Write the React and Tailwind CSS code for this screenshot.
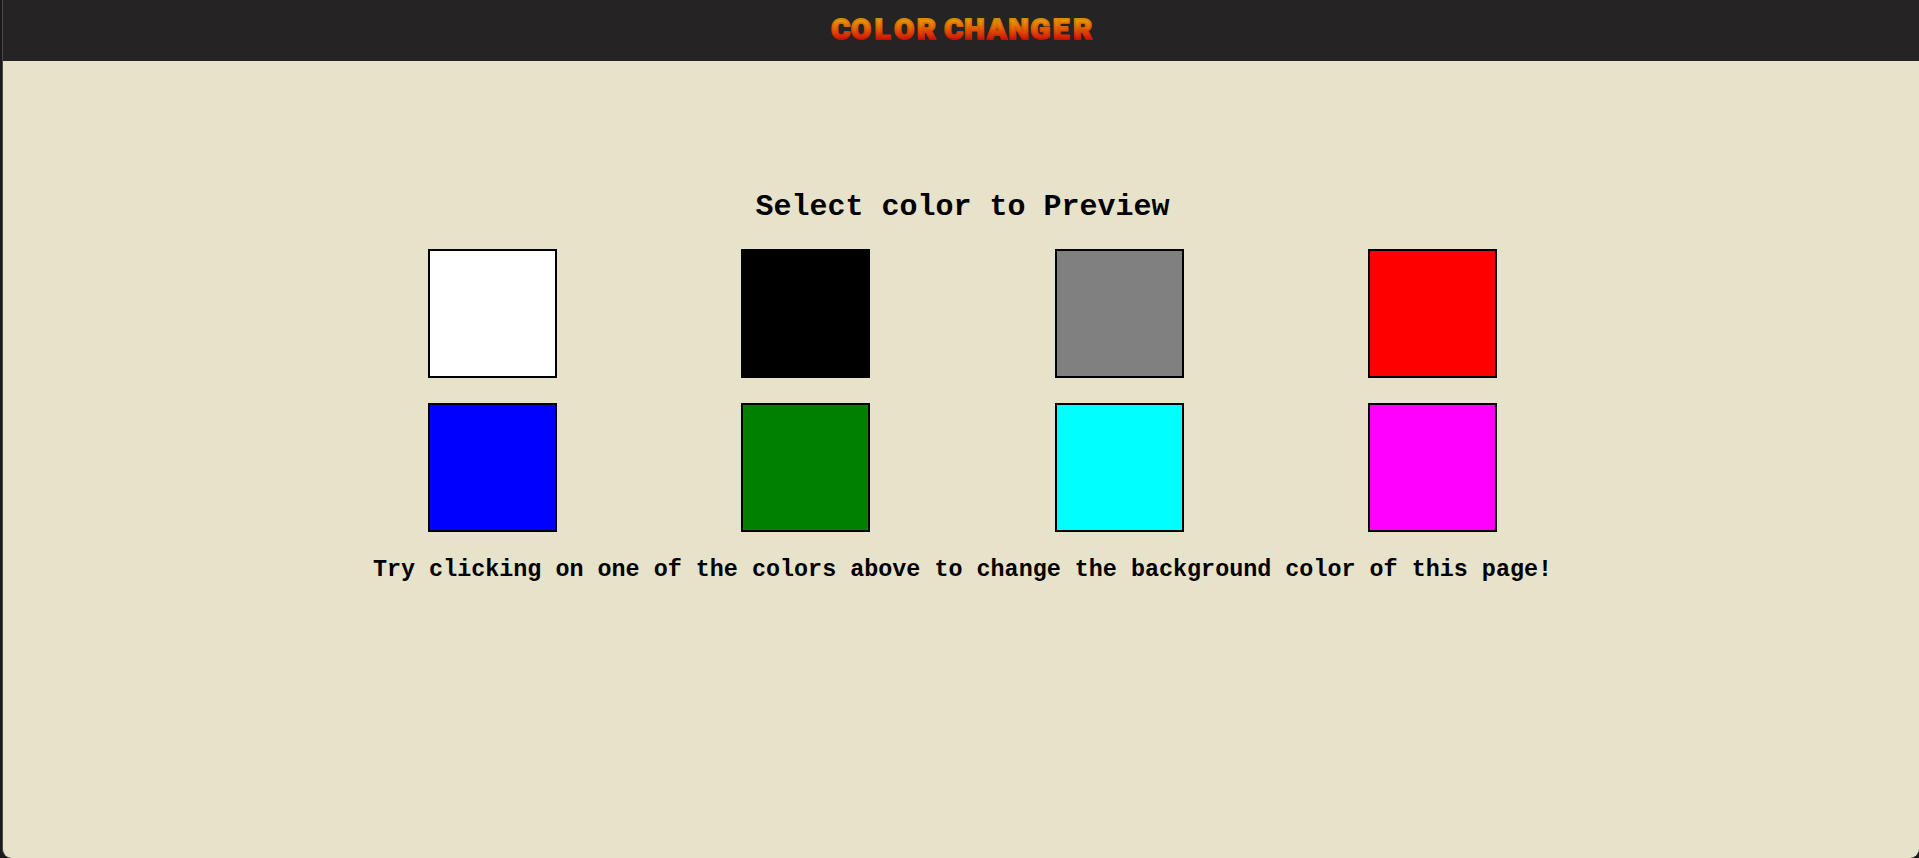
const swatches = [
  { name: "white", fill: "bg-white" },
  { name: "black", fill: "bg-black" },
  { name: "gray", fill: "bg-[#808080]" },
  { name: "red", fill: "bg-[#ff0000]" },
  { name: "blue", fill: "bg-[#0000ff]" },
  { name: "green", fill: "bg-[#008000]" },
  { name: "cyan", fill: "bg-[#00ffff]" },
  { name: "magenta", fill: "bg-[#ff00ff]" },
];

function Logo() {
  return (
    <svg width="275" height="34" viewBox="0 0 275 34" role="img" aria-label="Color Changer" className="overflow-visible">
      <defs>
        <linearGradient id="flame" gradientUnits="userSpaceOnUse" x1="0" y1="6" x2="0" y2="28">
          <stop offset="0" stopColor="#f0a400" />
          <stop offset="0.5" stopColor="#e66000" />
          <stop offset="1" stopColor="#d50c00" />
        </linearGradient>
        <linearGradient id="ember" gradientUnits="userSpaceOnUse" x1="0" y1="6" x2="0" y2="28">
          <stop offset="0" stopColor="#d99000" />
          <stop offset="0.5" stopColor="#dc5600" />
          <stop offset="1" stopColor="#c80c00" />
        </linearGradient>
      </defs>
      <text
        y="26.9"
        transform="scale(1.05 1)"
        x="15 34.3 54.8 75.4 96.7 111 122.7 142.4 163.6 184.3 205 224.9 245.3"
        textAnchor="middle"
        fill="url(#flame)"
        stroke="url(#ember)"
        strokeWidth="1.9"
        strokeLinejoin="round"
        className="font-[Roboto,sans-serif] text-[27.5px] font-black"
      >
        COLOR CHANGER
      </text>
    </svg>
  );
}

export default function App() {
  return (
    <div className="h-[858px] w-full overflow-hidden bg-[#1b191a] pl-0.5">
      <div className="flex h-full flex-col overflow-hidden rounded-b-[9px] border-l border-[#4a4849] bg-[#e7e2ca] font-['Courier_New','Liberation_Mono',monospace] text-black">
        <header className="flex h-[61px] shrink-0 justify-center bg-[#252324] pt-3 pl-[3px]">
          <Logo />
        </header>
        <main className="flex flex-col items-center pt-[129px] pl-[3px]">
          <h2 className="h-[59px] text-[30px] leading-[34px] font-bold whitespace-nowrap">
            Select color to Preview
          </h2>
          <div className="grid w-[1069px] grid-cols-[repeat(4,129px)] justify-between gap-y-[25px]">
            {swatches.map(({ name, fill }) => (
              <button
                key={name}
                type="button"
                aria-label={name}
                className={`size-[129px] border-2 border-black ${fill}`}
              />
            ))}
          </div>
          <h3 className="mt-[25px] text-[23.4px] leading-[27px] font-bold whitespace-nowrap">
            Try clicking on one of the colors above to change the background color of this page!
          </h3>
        </main>
      </div>
    </div>
  );
}
